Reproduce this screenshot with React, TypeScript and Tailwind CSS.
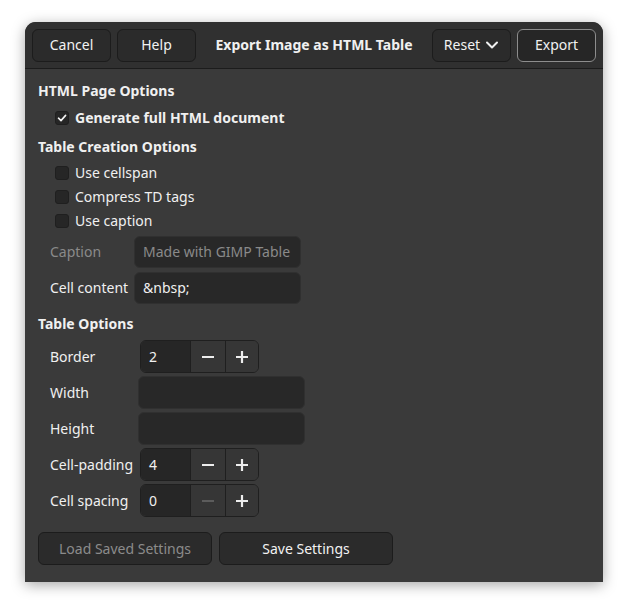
import type { ReactNode } from 'react'

// Кнопка в шапке / внизу диалога
function Btn({ children, className = '', disabled = false }: { children: ReactNode; className?: string; disabled?: boolean }) {
  return (
    <div
      className={`flex h-[33px] items-center justify-center rounded-[6px] border border-[#1c1c1c] bg-[#2b2b2b] ${
        disabled ? 'text-[#8b8b8b]' : 'text-[#f2f2f2]'
      } ${className}`}
    >
      {children}
    </div>
  )
}

function Check({ checked = false, label, bold = false }: { checked?: boolean; label: string; bold?: boolean }) {
  return (
    <div className="flex h-[24px] items-center pl-[17px]">
      <div className="flex h-[14px] w-[14px] items-center justify-center rounded-[3px] border border-[#1f1f1f] bg-[#262626]">
        {checked && (
          <svg width="10" height="10" viewBox="0 0 10 10">
            <path d="M1.5 5.2 L4 7.6 L8.6 2.4" fill="none" stroke="#f2f2f2" strokeWidth="1.6" strokeLinecap="round" strokeLinejoin="round" />
          </svg>
        )}
      </div>
      <span className={`ml-[6px] ${bold ? 'font-bold' : ''}`}>{label}</span>
    </div>
  )
}

function Spin({ value, minusDisabled = false }: { value: string; minusDisabled?: boolean }) {
  return (
    <div className="ml-[2px] flex h-[33px] w-[119px] overflow-hidden rounded-[6px] border border-[#1f1f1f]">
      <div className="flex w-[49px] items-center bg-[#262626] pl-[8px]">{value}</div>
      <div className="flex w-[35px] items-center justify-center border-l border-[#1f1f1f] bg-[#363636]">
        <svg width="14" height="14" viewBox="0 0 14 14">
          <path d="M1 7 H13" stroke={minusDisabled ? '#5c5c5c' : '#ededed'} strokeWidth="2.2" />
        </svg>
      </div>
      <div className="flex flex-1 items-center justify-center border-l border-[#1f1f1f] bg-[#363636]">
        <svg width="14" height="14" viewBox="0 0 14 14">
          <path d="M1 7 H13 M7 1 V13" stroke="#ededed" strokeWidth="2.2" />
        </svg>
      </div>
    </div>
  )
}

export default function App() {
  return (
    <div
      className="h-[610px] w-[628px] bg-white pl-[25px] pt-[22px] text-[14px] leading-[18px] text-[#f0f0f0]"
      style={{ fontFamily: '"Noto Sans", "DejaVu Sans", sans-serif' }}
    >
      <div className="flex h-[560px] w-[578px] flex-col overflow-hidden rounded-t-[11px] bg-[#3a3a3a] shadow-[0_3px_14px_rgba(0,0,0,0.35)]">
        {/* Шапка */}
        <div className="flex h-[47px] items-center gap-[6px] border-b border-[#1c1c1c] bg-[#303030] px-[7px]">
          <Btn className="w-[79px]">Cancel</Btn>
          <Btn className="w-[79px]">Help</Btn>
          <div className="flex-1 text-center font-bold">Export Image as HTML Table</div>
          <Btn className="w-[79px] gap-[5px]">
            Reset
            <svg width="14" height="14" viewBox="0 0 14 14">
              <path d="M2 4.5 L7 9.5 L12 4.5" fill="none" stroke="#f0f0f0" strokeWidth="2" strokeLinecap="round" strokeLinejoin="round" />
            </svg>
          </Btn>
          <div className="flex h-[33px] w-[79px] items-center justify-center rounded-[6px] border border-[#8d8d8d] bg-[#262626]">
            Export
          </div>
        </div>

        {/* Содержимое */}
        <div className="flex flex-col pl-[13px] pt-[13px]">
          <div className="h-[18px] font-bold">HTML Page Options</div>
          <div className="mt-[6px]">
            <Check checked bold label="Generate full HTML document" />
          </div>

          <div className="mt-[8px] h-[18px] font-bold">Table Creation Options</div>
          <div className="mt-[5px] flex flex-col">
            <Check label="Use cellspan" />
            <Check label="Compress TD tags" />
            <Check label="Use caption" />
          </div>

          <div className="mt-[3px] grid grid-cols-[84px_167px] gap-y-[4px] pl-[12px]">
            <div className="flex items-center text-[#8a8a8a]">Caption</div>
            <div className="flex h-[32px] items-center rounded-[6px] border border-[#303030] bg-[#282828] pl-[8px] text-[#8a8a8a]">
              Made with GIMP Table
            </div>
            <div className="flex items-center">Cell content</div>
            <div className="flex h-[32px] items-center rounded-[6px] border border-[#303030] bg-[#282828] pl-[8px]">&amp;nbsp;</div>
          </div>

          <div className="mt-[11px] h-[18px] font-bold">Table Options</div>
          <div className="mt-[7px] grid grid-cols-[88px_167px] gap-y-[3px] pl-[12px]">
            <div className="flex items-center">Border</div>
            <Spin value="2" />
            <div className="flex items-center">Width</div>
            <div className="h-[33px] rounded-[6px] border border-[#303030] bg-[#282828]" />
            <div className="flex items-center">Height</div>
            <div className="h-[33px] rounded-[6px] border border-[#303030] bg-[#282828]" />
            <div className="flex items-center">Cell-padding</div>
            <Spin value="4" />
            <div className="flex items-center">Cell spacing</div>
            <Spin value="0" minusDisabled />
          </div>

          <div className="mt-[15px] flex gap-[7px]">
            <Btn disabled className="w-[174px]">Load Saved Settings</Btn>
            <Btn className="w-[174px]">Save Settings</Btn>
          </div>
        </div>
      </div>
    </div>
  )
}
